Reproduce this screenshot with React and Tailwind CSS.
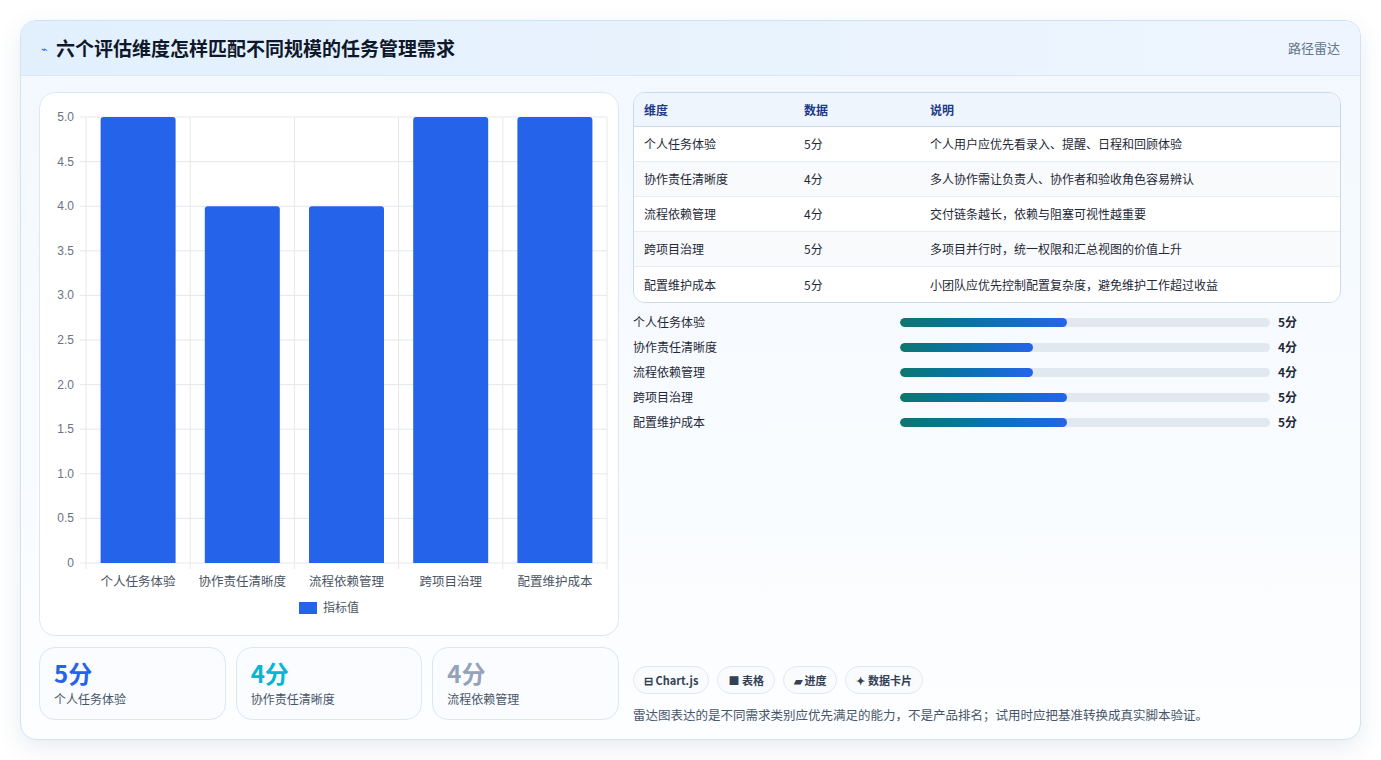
const F = { fontFamily: '"Noto Sans CJK SC","Noto Sans",sans-serif' };
const rows = [
  ["个人任务体验", 5, "个人用户应优先看录入、提醒、日程和回顾体验"],
  ["协作责任清晰度", 4, "多人协作需让负责人、协作者和验收角色容易辨认"],
  ["流程依赖管理", 4, "交付链条越长，依赖与阻塞可视性越重要"],
  ["跨项目治理", 5, "多项目并行时，统一权限和汇总视图的价值上升"],
  ["配置维护成本", 5, "小团队应优先控制配置复杂度，避免维护工作超过收益"],
];

function Chart() {
  const x0 = 46, x1 = 567, y0 = 24, y1 = 470;
  const h = y1 - y0, cw = (x1 - x0) / 5;
  const ticks = [0, 0.5, 1, 1.5, 2, 2.5, 3, 3.5, 4, 4.5, 5];
  return (
    <svg width="578" height="542" style={{ fontFamily: '"Liberation Sans","Noto Sans CJK SC",sans-serif' }}>
      {ticks.map((t) => {
        const y = y1 - (t / 5) * h;
        return (
          <g key={t}>
            <line x1={x0 - 6} x2={x1} y1={y} y2={y} stroke="#e5e7eb" />
            <text x={x0 - 12} y={y + 4} textAnchor="end" fontSize="12" fill="#6b7280">{t === 0 ? "0" : t.toFixed(1)}</text>
          </g>
        );
      })}
      {[0, 1, 2, 3, 4, 5].map((i) => (
        <line key={i} x1={x0 + i * cw} x2={x0 + i * cw} y1={y0} y2={y1 + 6} stroke="#e5e7eb" />
      ))}
      {rows.map((r, i) => {
        const bh = (r[1] / 5) * h;
        const cx = x0 + i * cw + cw / 2;
        return (
          <g key={i}>
            <path d={`M${cx - 37.5} ${y1} V${y1 - bh + 3} Q${cx - 37.5} ${y1 - bh} ${cx - 34.5} ${y1 - bh} H${cx + 34.5} Q${cx + 37.5} ${y1 - bh} ${cx + 37.5} ${y1 - bh + 3} V${y1} Z`} fill="#2563eb" />
            <text x={cx} y={y1 + 23} textAnchor="middle" fontSize="12.5" fill="#4b5563" style={F}>{r[0]}</text>
          </g>
        );
      })}
      <rect x="259" y="509" width="18" height="12" fill="#2563eb" />
      <text x="283" y="519" fontSize="12" fill="#4b5563" style={F}>指标值</text>
    </svg>
  );
}

export default function App() {
  return (
    <div className="w-[1381px] h-[760px] bg-white pt-[20px] pl-[20px]" style={F}>
      <div className="w-[1341px] h-[720px] rounded-2xl border border-[#cfe3f5] shadow-[0_8px_24px_rgba(30,64,120,0.10)] overflow-hidden bg-gradient-to-b from-[#f2f8fe] to-[#fdfeff] flex flex-col">
        <div className="h-[55px] flex items-center justify-between px-[20px] bg-gradient-to-r from-[#e2f0fd] to-[#eef5fe] border-b border-[#d8e8f7]">
          <div className="flex items-center gap-[8px]">
            <span className="text-[#2563eb] text-[11px]">⌁</span>
            <span className="text-[19px] font-bold text-[#0f172a]">六个评估维度怎样匹配不同规模的任务管理需求</span>
          </div>
          <span className="text-[13px] text-[#64748b]">路径雷达</span>
        </div>
        <div className="flex gap-[14px] px-[18px] pt-[16px]">
          <div className="w-[580px] flex flex-col gap-[11px]">
            <div className="h-[544px] rounded-2xl border border-[#dbe7f3] bg-white">
              <Chart />
            </div>
            <div className="flex gap-[10px]">
              {[["5分", "个人任务体验", "text-[#2563eb]"], ["4分", "协作责任清晰度", "text-[#06b6d4]"], ["4分", "流程依赖管理", "text-[#94a3b8]"]].map((s, i) => (
                <div key={i} className="flex-1 h-[73px] rounded-2xl border border-[#dbe7f3] bg-[#fafcff] px-[14px] pt-[10px]">
                  <div className={`text-[24px] font-bold leading-[30px] ${s[2]}`}>{s[0]}</div>
                  <div className="text-[12px] text-[#475569] mt-[2px]">{s[1]}</div>
                </div>
              ))}
            </div>
          </div>
          <div className="w-[708px] flex flex-col">
            <div className="rounded-xl border border-[#cbd9e8] overflow-hidden bg-white">
              <div className="h-[34px] flex items-center text-[12px] font-semibold text-[#1e3a8a] bg-[#eef5fd] border-b border-[#cbd9e8]">
                <div className="w-[170px] pl-[10px]">维度</div>
                <div className="w-[126px]">数据</div>
                <div>说明</div>
              </div>
              {rows.map((r, i) => (
                <div key={i} className={`h-[35px] flex items-center text-[12px] text-[#1f2937] ${i % 2 ? "bg-[#f8fafc]" : "bg-white"} ${i < 4 ? "border-b border-[#e5edf5]" : ""}`}>
                  <div className="w-[170px] pl-[10px]">{r[0]}</div>
                  <div className="w-[126px]">{r[1]}分</div>
                  <div>{r[2]}</div>
                </div>
              ))}
            </div>
            <div className="flex flex-col gap-[7px] mt-[10px]">
              {rows.map((r, i) => (
                <div key={i} className="h-[18px] flex items-center text-[12px] text-[#1f2937]">
                  <div className="w-[267px]">{r[0]}</div>
                  <div className="w-[370px] h-[9px] rounded-full bg-[#e2e8f0] overflow-hidden">
                    <div className="h-full rounded-full bg-gradient-to-r from-[#0f766e] to-[#2563eb]" style={{ width: r[1] === 5 ? "45%" : "36%" }} />
                  </div>
                  <div className="ml-[8px] font-bold">{r[1]}分</div>
                </div>
              ))}
            </div>
            <div className="flex gap-[8px] mt-[235px]">
              {["⊟ Chart.js", "■ 表格", "▰ 进度", "✦ 数据卡片"].map((c) => (
                <div key={c} className="h-[28px] px-[10px] flex items-center rounded-full border border-[#e2e8f0] bg-[#fafbfc] text-[11px] font-semibold text-[#334155]">{c}</div>
              ))}
            </div>
            <div className="mt-[12px] text-[12.5px] text-[#475569]">雷达图表达的是不同需求类别应优先满足的能力，不是产品排名；试用时应把基准转换成真实脚本验证。</div>
          </div>
        </div>
      </div>
    </div>
  );
}
